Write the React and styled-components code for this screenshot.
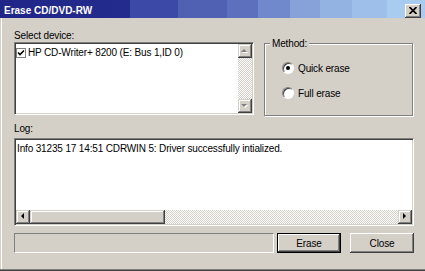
import styled, { createGlobalStyle } from 'styled-components';

const GlobalStyle = createGlobalStyle`
  html, body {
    margin: 0;
    padding: 0;
    background: #d4d0c8;
  }
  body {
    font-family: 'Liberation Sans', Arial, sans-serif;
    font-size: 10px;
    letter-spacing: -0.15px;
    color: #000;
  }
`;

const Window = styled.div`
  width: 425px;
  height: 271px;
  background: #d4d0c8;
  display: flex;
  flex-direction: column;
  box-sizing: border-box;
  box-shadow: inset 0 -1px #404040, inset 0 -2px #808080, inset 1px 0 #d4d0c8, inset 2px 0 #fff;
`;

const TitleBar = styled.div`
  height: 18px;
  flex: none;
  display: flex;
  align-items: center;
  justify-content: space-between;
  padding: 0 4px;
  background: linear-gradient(to right,
    #1f2688 0px, #232c8c 130px,
    #3c49a7 130px, #3c49a7 178px,
    #5060b3 178px, #5060b3 227px,
    #5c70bd 227px, #5c70bd 258px,
    #7089cc 258px, #7089cc 290px,
    #86a2d9 290px, #86a2d9 320px,
    #93b3e2 320px, #93b3e2 352px,
    #9dbfe9 352px, #9dbfe9 387px,
    #a8cbf0 387px, #a8cbf0 425px);
`;

const TitleText = styled.span`
  color: #fff;
  font-weight: bold;
  line-height: 13px;
  margin-top: 3px;
  letter-spacing: 0;
`;

const CloseBox = styled.div`
  width: 16px;
  height: 14px;
  margin-top: 3px;
  background: #d4d0c8;
  display: flex;
  align-items: center;
  justify-content: center;
  box-shadow: inset -1px -1px #404040, inset 1px 1px #fff, inset -2px -2px #808080;
`;

const Body = styled.div`
  flex: 1;
  display: flex;
  flex-direction: column;
  padding: 11px 11px 0 14px;
`;

const TopRow = styled.div`
  display: flex;
  gap: 10px;
  height: 87px;
`;

const DeviceCol = styled.div`
  width: 240px;
  display: flex;
  flex-direction: column;
`;

const Label = styled.div`
  line-height: 13px;
  height: 13px;
  margin-top: ${p => p.$top || 0}px;
`;

const Sunken = styled.div`
  box-sizing: border-box;
  background: #fff;
  border-style: solid;
  border-width: 1px;
  border-color: #808080 #fff #fff #808080;
  box-shadow: inset 1px 1px #404040, inset -1px -1px #d4d0c8;
  padding: 1px;
`;

const ListBox = styled(Sunken)`
  height: 73px;
  display: flex;
`;

const Items = styled.div`
  flex: 1;
  padding-top: 2px;
`;

const Item = styled.div`
  display: flex;
  align-items: center;
  gap: 2px;
  line-height: 13px;
`;

const Check = styled.span`
  width: 10px;
  height: 10px;
  box-sizing: border-box;
  border: 1px solid #808080;
  background: #fff;
  display: flex;
  align-items: center;
  justify-content: center;
`;

const VScroll = styled.div`
  width: 14px;
  display: flex;
  flex-direction: column;
`;

const HScroll = styled.div`
  height: 14px;
  display: flex;
`;

const Track = styled.div`
  flex: 1;
  background: repeating-conic-gradient(#d4d0c8 0 25%, #fff 0 50%) 0 0 / 2px 2px;
`;

const ScrollBtn = styled.div`
  width: ${p => p.$w || 14}px;
  height: 14px;
  flex: none;
  background: #d4d0c8;
  display: flex;
  align-items: center;
  justify-content: center;
  box-shadow: inset -1px -1px #404040, inset 1px 1px #d4d0c8, inset -2px -2px #808080, inset 2px 2px #fff;
`;

const GroupBox = styled.div`
  position: relative;
  margin-top: 14px;
  width: 149px;
  height: 73px;
  box-sizing: border-box;
  border: 1px solid #808080;
  box-shadow: inset 1px 1px #fff, 1px 1px #fff;
  padding: 17px 0 0 17px;
  display: flex;
  flex-direction: column;
  gap: 11px;
`;

const Legend = styled.span`
  position: absolute;
  top: -7px;
  left: 5px;
  padding: 0 2px;
  line-height: 13px;
  background: #d4d0c8;
`;

const RadioRow = styled.label`
  display: flex;
  align-items: center;
  gap: 4px;
  height: 14px;
  line-height: 13px;
`;

const Radio = styled.span`
  width: 12px;
  height: 12px;
  box-sizing: border-box;
  border-radius: 50%;
  border: 1px solid;
  border-color: #808080 #fff #fff #808080;
  background: #fff;
  box-shadow: inset 1px 1px #404040;
  display: flex;
  align-items: center;
  justify-content: center;

  &::after {
    content: '';
    width: 4px;
    height: 4px;
    border-radius: 50%;
    background: ${p => (p.$checked ? '#000' : 'transparent')};
  }
`;

const LogBox = styled(Sunken)`
  margin-top: 3px;
  height: 88px;
  display: flex;
  flex-direction: column;
`;

const LogText = styled.div`
  flex: 1;
  padding: 2px 1px 0;
  line-height: 13px;
  white-space: nowrap;
`;

const BottomRow = styled.div`
  margin-top: 7px;
  height: 20px;
  display: flex;
`;

const Status = styled.div`
  width: 260px;
  box-sizing: border-box;
  border-style: solid;
  border-width: 1px;
  border-color: #808080 #fff #fff #808080;
`;

const Button = styled.button`
  width: 64px;
  height: 20px;
  margin-left: ${p => p.$gap}px;
  box-sizing: border-box;
  padding: 0;
  font: inherit;
  letter-spacing: inherit;
  color: #000;
  background: #d4d0c8;
  border: ${p => (p.$default ? '1px solid #000' : 'none')};
  box-shadow: inset -1px -1px #404040, inset 1px 1px #fff, inset -2px -2px #808080;
`;

const arrowPaths = {
  up: 'M3 0 L6 3 L0 3 Z',
  down: 'M0 0 L6 0 L3 3 Z',
  left: 'M3 0 L3 6 L0 3 Z',
  right: 'M0 0 L3 3 L0 6 Z',
};

const Arrow = ({ dir, disabled }) => {
  const vert = dir === 'up' || dir === 'down';
  const w = vert ? 7 : 4;
  const h = vert ? 4 : 7;
  return (
    <svg width={w + 1} height={h + 1} viewBox={`0 0 ${w + 1} ${h + 1}`}>
      {disabled && <path d={arrowPaths[dir]} fill="#fff" transform="translate(1 1)" />}
      <path d={arrowPaths[dir]} fill={disabled ? '#808080' : '#000'} />
    </svg>
  );
};

export default function App() {
  return (
    <>
      <GlobalStyle />
      <Window>
        <TitleBar>
          <TitleText>Erase CD/DVD-RW</TitleText>
          <CloseBox>
            <svg width="8" height="7" viewBox="0 0 8 7">
              <path d="M0.5 0 L7.5 7 M7.5 0 L0.5 7" stroke="#000" strokeWidth="1.7" />
            </svg>
          </CloseBox>
        </TitleBar>
        <Body>
          <TopRow>
            <DeviceCol>
              <Label>Select device:</Label>
              <ListBox>
                <Items>
                  <Item>
                    <Check>
                      <svg width="8" height="8" viewBox="0 0 8 8">
                        <path d="M1 3.5 L3 5.5 L7 1.5" stroke="#000" strokeWidth="1.6" fill="none" />
                      </svg>
                    </Check>
                    HP CD-Writer+ 8200 (E: Bus 1,ID 0)
                  </Item>
                </Items>
                <VScroll>
                  <ScrollBtn><Arrow dir="up" disabled /></ScrollBtn>
                  <Track />
                  <ScrollBtn><Arrow dir="down" disabled /></ScrollBtn>
                </VScroll>
              </ListBox>
            </DeviceCol>
            <GroupBox>
              <Legend>Method:</Legend>
              <RadioRow>
                <Radio $checked />
                Quick erase
              </RadioRow>
              <RadioRow>
                <Radio />
                Full erase
              </RadioRow>
            </GroupBox>
          </TopRow>
          <Label $top={6}>Log:</Label>
          <LogBox>
            <LogText>Info 31235 17 14:51 CDRWIN 5: Driver successfully intialized.</LogText>
            <HScroll>
              <ScrollBtn><Arrow dir="left" /></ScrollBtn>
              <ScrollBtn $w={135} />
              <Track />
              <ScrollBtn><Arrow dir="right" /></ScrollBtn>
            </HScroll>
          </LogBox>
          <BottomRow>
            <Status />
            <Button $default $gap={3}>Erase</Button>
            <Button $gap={9}>Close</Button>
          </BottomRow>
        </Body>
      </Window>
    </>
  );
}
